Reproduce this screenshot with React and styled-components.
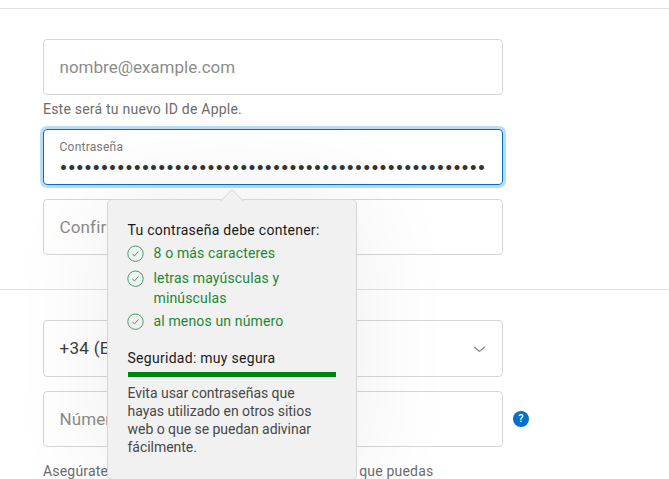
import React from 'react';
import styled, { createGlobalStyle } from 'styled-components';

const GlobalStyle = createGlobalStyle`
  * { box-sizing: border-box; }
  body { margin: 0; background: #fff; overflow: hidden; }
`;

const Page = styled.main`
  height: 479px;
  overflow: hidden;
  padding-top: 8px;
  background: #fff;
  font-family: Roboto, 'Liberation Sans', sans-serif;
`;

const Section = styled.section`
  display: flex;
  flex-direction: column;
  padding: 30px 0 34px 43px;
  border-top: 1px solid #e3e3e3;
`;

const Field = styled.div`
  position: relative;
  display: flex;
  align-items: center;
  justify-content: space-between;
  width: 460px;
  height: ${(p) => (p.$tall ? 57 : 56)}px;
  flex: none;
  margin-top: ${(p) => p.$gap || 0}px;
  padding: 0 16px 0 15.5px;
  border: 1px solid #d6d6d6;
  border-radius: 4px;
`;

const PasswordField = styled(Field)`
  flex-direction: column;
  align-items: flex-start;
  justify-content: flex-start;
  padding-top: 10px;
  border-color: #0070c9;
  box-shadow: 0 0 0 3px #badcfb;
`;

const FieldText = styled.span`
  font-size: 17px;
  line-height: 22px;
  letter-spacing: ${(p) => p.$tracking || 0}px;
  color: ${(p) => (p.$filled ? '#3c3c3c' : '#8c8c8c')};
  padding-bottom: ${(p) => (p.$filled ? 1 : 0)}px;
  white-space: nowrap;
`;

const FloatingLabel = styled.label`
  font-size: 12px;
  line-height: 14px;
  letter-spacing: 0.24px;
  color: #777;
`;

const Bullets = styled.span`
  font: 18.5px/20px 'Liberation Sans', sans-serif;
  letter-spacing: 1.72px;
  margin: 4px 0 0 0.7px;
  color: #333;
  white-space: nowrap;
`;

const Hint = styled.p`
  margin: ${(p) => p.$top}px 0 0;
  height: 18px;
  font-size: 14px;
  line-height: 18px;
  letter-spacing: ${(p) => p.$tracking}px;
  color: #6c6c6c;
  white-space: nowrap;
`;

const PhoneRow = styled.div`
  display: flex;
  align-items: center;
  gap: 10px;
  margin-top: 14px;
`;

const Popover = styled.aside`
  position: absolute;
  z-index: 2;
  top: 69px;
  left: 63px;
  width: 250px;
  height: 281px;
  padding: 21px 20px 0 19.5px;
  background: #f1f1f1;
  border: 1px solid #d6d6d6;
  border-radius: 5px;
  box-shadow: 0 0 100px 4px rgba(0, 0, 0, 0.065);
  font-size: 14px;
  line-height: 18px;
`;

const Arrow = styled.svg`
  position: absolute;
  top: -12px;
  left: 112px;
  width: 24px;
  height: 13px;
`;

const PopoverTitle = styled.div`
  height: 18px;
  letter-spacing: ${(p) => p.$tracking}px;
  color: #1a1a1a;
  white-space: nowrap;
`;

const Rules = styled.ul`
  display: flex;
  flex-direction: column;
  margin: 4px 0 0 -0.5px;
  padding: 0;
  list-style: none;
`;

const Rule = styled.li`
  display: flex;
  gap: 9.5px;
  height: ${(p) => p.$height}px;
  line-height: 20px;
  letter-spacing: 0.15px;
  color: #1c8836;
  white-space: pre-line;
`;

const CheckIcon = styled.svg`
  flex: none;
  width: 17px;
  height: 17px;
  margin-top: 2px;
`;

const Strength = styled.div`
  margin-top: 13px;
`;

const StrengthBar = styled.div`
  width: 208px;
  height: 5px;
  margin: 5px 0 7px 0.5px;
  background: #00820f;
`;

const Advice = styled.p`
  margin: 0;
  color: #484848;
  white-space: pre-line;
  letter-spacing: -0.03px;
`;

const HelpBadge = styled.button`
  display: grid;
  place-items: center;
  width: 16px;
  height: 16px;
  padding: 0;
  border: 0;
  border-radius: 50%;
  background: #0070c9;
  color: #fff;
  font: 500 11px/16px Roboto, sans-serif;
`;

const Chevron = styled.svg`
  width: 13px;
  height: 8px;
`;

const rules = [
  { text: '8 o más caracteres', height: 25 },
  { text: 'letras mayúsculas y\nminúsculas', height: 43 },
  { text: 'al menos un número', height: 25 },
];

const Check = () => (
  <CheckIcon viewBox="0 0 17 17" fill="none" stroke="#45946a">
    <circle cx="8.5" cy="8.7" r="7.7" strokeWidth="0.95" />
    <path d="M5.3 8.9 7.5 10.9 11.5 6.4" strokeWidth="1" />
  </CheckIcon>
);

export default function App() {
  return (
    <>
      <GlobalStyle />
      <Page>
        <Section>
          <Field><FieldText>nombre@example.com</FieldText></Field>
          <Hint $top={5} $tracking={0.22}>Este será tu nuevo ID de Apple.</Hint>
          <PasswordField $gap={11}>
            <FloatingLabel>Contraseña</FloatingLabel>
            <Bullets>{'•'.repeat(52)}</Bullets>
            <Popover>
              <Arrow viewBox="0 0 24 13">
                <path d="M1 13V12L12 1L23 12V13Z" fill="#f1f1f1" />
                <path d="M0.5 12.5H1.5L12 1.5L22.5 12.5H23.5" fill="none" stroke="#d6d6d6" />
              </Arrow>
              <PopoverTitle $tracking={0.27}>Tu contraseña debe contener:</PopoverTitle>
              <Rules>
                {rules.map((r) => (
                  <Rule key={r.text} $height={r.height}>
                    <Check />
                    <span>{r.text}</span>
                  </Rule>
                ))}
              </Rules>
              <Strength>
                <PopoverTitle $tracking={0.28}>Seguridad: muy segura</PopoverTitle>
                <StrengthBar />
              </Strength>
              <Advice>{'Evita usar contraseñas que\nhayas utilizado en otros sitios\nweb o que se puedan adivinar\nfácilmente.'}</Advice>
            </Popover>
          </PasswordField>
          <Field $gap={14}><FieldText $tracking={0.15}>Confirma la contraseña</FieldText></Field>
        </Section>
        <Section>
          <Field $tall>
            <FieldText $filled $tracking={0.3}>+34 (España)</FieldText>
            <Chevron viewBox="0 0 13 8" fill="none" stroke="#888" strokeWidth="1.3">
              <path d="M1 1.7 6.5 6.5 12 1.7" />
            </Chevron>
          </Field>
          <PhoneRow>
            <Field><FieldText $tracking={0.1}>Número de teléfono</FieldText></Field>
            <HelpBadge>?</HelpBadge>
          </PhoneRow>
          <Hint $top={15} $tracking={0.19}>Asegúrate de introducir un número de teléfono al que puedas</Hint>
        </Section>
      </Page>
    </>
  );
}
